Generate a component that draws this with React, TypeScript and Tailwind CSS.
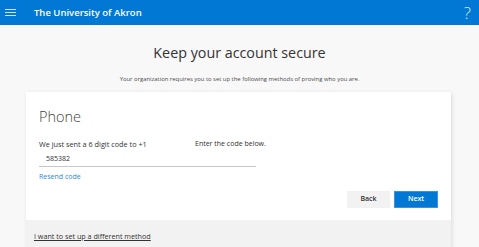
import React from "react";

export default function App() {
  return (
    <div
      className="w-[479px] h-[247px] bg-[#f8f8f8] overflow-hidden flex flex-col"
      style={{ fontFamily: '"Open Sans", "Noto Sans", sans-serif' }}
    >
      <header className="h-[25px] shrink-0 bg-[#0078d4] flex items-center text-white">
        <svg width="12" height="10" viewBox="0 0 12 10" className="ml-[5px]">
          <rect x="0" y="1" width="11" height="1" fill="#cfe4f7" />
          <rect x="0" y="4" width="11" height="1" fill="#cfe4f7" />
          <rect x="0" y="7" width="11" height="1" fill="#cfe4f7" />
        </svg>
        <span className="ml-[17px] text-[9.5px] font-semibold leading-none">
          The University of Akron
        </span>
        <span className="ml-auto mr-[8px] text-[17px] font-light text-[#dbe9f7] leading-none">
          ?
        </span>
      </header>
      <div className="flex flex-col items-center">
        <h1 className="mt-[18px] text-[14.3px] leading-[20px] text-[#333]">
          Keep your account secure
        </h1>
        <p className="mt-[12px] text-[5.9px] leading-[8px] text-[#4a4a4a]">
          Your organization requires you to set up the following methods of
          proving who you are.
        </p>
      </div>
      <div className="ml-[26px] w-[425px] mt-[9px] bg-white shadow-[1px_1px_4px_rgba(0,0,0,0.12)] flex flex-col">
        <div className="pl-[13px] pr-[13px] pt-[15px] pb-[12px] flex flex-col">
          <div className="text-[14.5px] font-light leading-[20px] text-[#444]">Phone</div>
          <div className="mt-[12px] flex text-[7.3px] leading-[10px] text-[#333]">
            <span className="w-[156px]">We just sent a 6 digit code to +1</span>
            <span className="text-[7px]">Enter the code below.</span>
          </div>
          <div className="mt-[5px] w-[217px] border-b border-[#c8c8c8] pl-[7px] pb-[2px] text-[7px] leading-[10px] text-[#333]">
            585382
          </div>
          <div className="mt-[5px] text-[7px] leading-[10px] text-[#2b88d8]">Resend code</div>
          <div className="mt-[9px] flex justify-end gap-[4px]">
            <button className="w-[43px] h-[17px] bg-[#f2f2f2] text-[7px] font-semibold text-[#333]">
              Back
            </button>
            <button className="w-[44px] h-[17px] bg-[#0078d4] border border-[#3c93dc] text-[7px] font-semibold text-white">
              Next
            </button>
          </div>
        </div>
        <div className="h-[40px] bg-[#f2f2f2] pl-[8px] pt-[11px]">
          <div className="text-[7.2px] leading-[10px] text-[#333] underline">
            I want to set up a different method
          </div>
        </div>
      </div>
    </div>
  );
}
